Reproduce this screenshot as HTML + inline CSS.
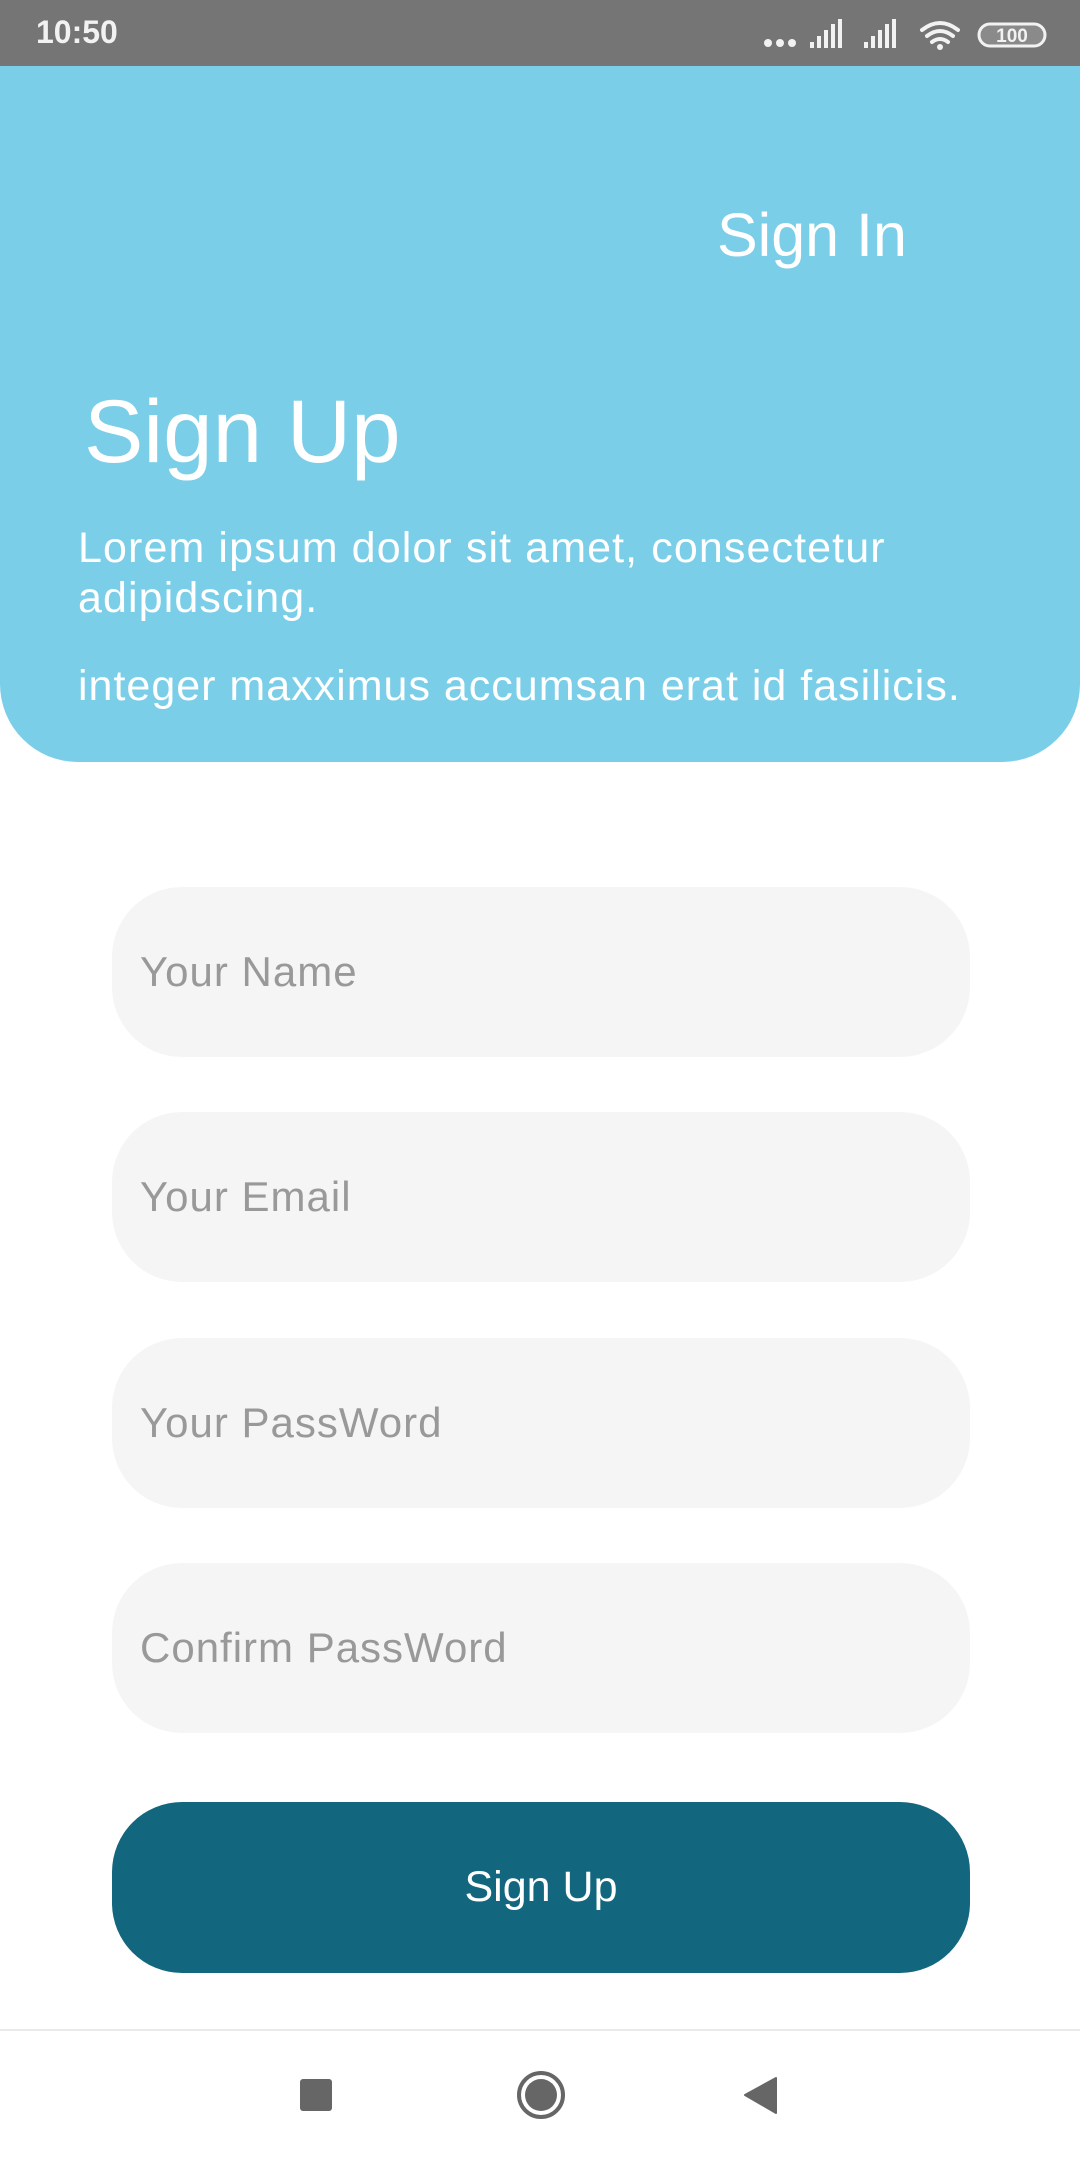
<!DOCTYPE html>
<html><head><meta charset="utf-8"><style>
*{margin:0;padding:0;box-sizing:border-box}
body{width:1080px;height:2160px;position:relative;background:#fff;font-family:"Liberation Sans",sans-serif;overflow:hidden}
.abs{position:absolute}
.status{left:0;top:0;width:1080px;height:66px;background:#757575}
.time{left:36px;top:14px;color:#f2f2f2;font-size:32px;font-weight:bold}
.header{left:0;top:66px;width:1080px;height:696px;background:#7BCEE8;border-radius:0 0 78px 78px}
.w{color:#fff;white-space:nowrap}
.field{left:112px;width:858px;height:170px;background:#f5f5f5;border-radius:70px}
.field span{position:absolute;left:28px;top:0;line-height:170px;font-size:42px;color:#999;letter-spacing:1px}
.btn{left:112px;top:1802px;width:858px;height:171px;background:#12677F;border-radius:70px;color:#fff;font-size:43px;text-align:center;line-height:171px}
</style></head><body>
<div class="abs status"></div>
<div class="abs time">10:50</div>
<svg class="abs" style="left:760px;top:14px" width="300" height="40" viewBox="0 0 300 40">
<g fill="#f2f2f2">
<circle cx="8" cy="29" r="4"/><circle cx="20" cy="29" r="4"/><circle cx="32" cy="29" r="4"/>
<rect x="50" y="28" width="4" height="6"/><rect x="57" y="22" width="4" height="12"/><rect x="64" y="16" width="4" height="18"/><rect x="71" y="10" width="4" height="24"/><rect x="78" y="5" width="4" height="29"/>
<rect x="104" y="28" width="4" height="6"/><rect x="111" y="22" width="4" height="12"/><rect x="118" y="16" width="4" height="18"/><rect x="125" y="10" width="4" height="24"/><rect x="132" y="5" width="4" height="29"/>
</g>
<g fill="none" stroke="#f2f2f2" stroke-width="4" stroke-linecap="round">
<path d="M162 16 Q180 2 198 16"/><path d="M167 22 Q180 12 193 22"/><path d="M172 28 Q180 22 188 28"/>
</g>
<circle cx="180" cy="33" r="3" fill="#f2f2f2"/>
<rect x="219" y="10" width="66" height="22" rx="11" fill="#8a8a8a" stroke="#f2f2f2" stroke-width="3"/>
<text x="252" y="28" font-size="19" font-weight="bold" fill="#f2f2f2" text-anchor="middle" font-family="Liberation Sans">100</text>
</svg>
<div class="abs header"></div>
<div class="abs w" style="left:717px;top:200px;font-size:61px">Sign In</div>
<div class="abs w" style="left:84px;top:380px;font-size:89px">Sign Up</div>
<div class="abs w" style="left:78px;top:523px;font-size:43px;line-height:50px;letter-spacing:1.1px">Lorem ipsum dolor sit amet, consectetur<br>adipidscing.</div>
<div class="abs w" style="left:78px;top:661px;font-size:43px;line-height:50px;letter-spacing:1px">integer maxximus accumsan erat id fasilicis.</div>
<div class="abs field" style="top:887px"><span>Your Name</span></div>
<div class="abs field" style="top:1112px"><span>Your Email</span></div>
<div class="abs field" style="top:1338px"><span>Your PassWord</span></div>
<div class="abs field" style="top:1563px"><span>Confirm PassWord</span></div>
<div class="abs btn">Sign Up</div>
<div class="abs" style="left:0;top:2029px;width:1080px;height:2px;background:#eaeaea"></div>
<div class="abs" style="left:300px;top:2079px;width:32px;height:32px;background:#666;border-radius:3px"></div>
<svg class="abs" style="left:515px;top:2069px" width="52" height="52"><circle cx="26" cy="26" r="22" fill="none" stroke="#666" stroke-width="4"/><circle cx="26" cy="26" r="16" fill="#666"/></svg>
<svg class="abs" style="left:740px;top:2074px" width="40" height="44"><path d="M36 4 L36 39 L5 21 Z" fill="#666" stroke="#666" stroke-width="2" stroke-linejoin="round"/></svg>
</body></html>
